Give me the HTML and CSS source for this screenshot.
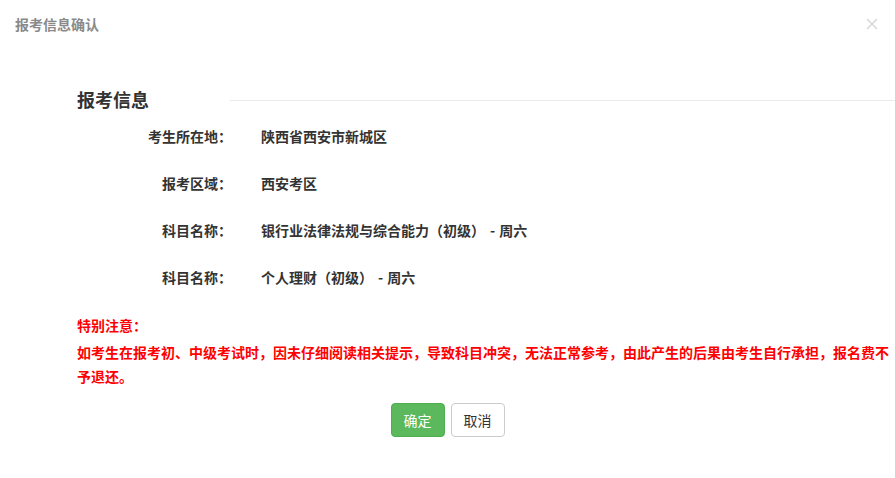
FILE: index.html
```html
<!DOCTYPE html>
<html lang="zh-CN">
<head>
<meta charset="utf-8">
<title>报考信息确认</title>
<link rel="stylesheet" href="styles.css">
</head>
<body>
<div class="modal">
  <div class="modal-header">
    <h4 class="modal-title">报考信息确认</h4>
    <button class="close" type="button" aria-label="关闭">
      <svg width="12" height="12" viewBox="0 0 12 12"><path d="M1 1 L11 11 M11 1 L1 11" stroke="#d9d9d9" stroke-width="1.6" fill="none"/></svg>
    </button>
  </div>
  <div class="modal-body">
    <div class="section-head">
      <h3 class="section-title">报考信息</h3>
      <div class="section-line"></div>
    </div>
    <div class="info-row"><span class="info-label">考生所在地：</span><span class="info-value">陕西省西安市新城区</span></div>
    <div class="info-row"><span class="info-label">报考区域：</span><span class="info-value">西安考区</span></div>
    <div class="info-row"><span class="info-label">科目名称：</span><span class="info-value">银行业法律法规与综合能力（初级）<span class="sep">-</span>周六</span></div>
    <div class="info-row"><span class="info-label">科目名称：</span><span class="info-value">个人理财（初级）<span class="sep">-</span>周六</span></div>
    <div class="notice-title">特别注意：</div>
    <p class="notice-text">如考生在报考初、中级考试时，因未仔细阅读相关提示，导致科目冲突，无法正常参考，由此产生的后果由考生自行承担，报名费不予退还。</p>
  </div>
  <div class="modal-footer">
    <button class="btn btn-success" type="button">确定</button>
    <button class="btn btn-default" type="button">取消</button>
  </div>
</div>
</body>
</html>
```

FILE: styles.css
```css
html, body {
  margin: 0;
  padding: 0;
  background: #fff;
}
body {
  font-family: "Noto Sans CJK SC", "Noto Sans", "Liberation Sans", sans-serif;
  font-size: 14px;
  color: #333;
  width: 895px;
  height: 478px;
  overflow: hidden;
}
.modal {
  display: flex;
  flex-direction: column;
}
.modal-header {
  display: flex;
  justify-content: space-between;
  align-items: center;
  padding: 14px 15px 0 15px;
  height: 20px;
}
.modal-title {
  margin: 0;
  font-size: 14px;
  line-height: 20px;
  font-weight: 700;
  color: #8a8a8a;
}
.close {
  border: 0;
  background: none;
  padding: 0;
  margin: 0 2px 0 0;
  width: 12px;
  height: 12px;
  display: flex;
}
.modal-body {
  padding: 0 0 0 77px;
}
.section-head {
  display: flex;
  align-items: center;
  margin-top: 53px;
  height: 24px;
}
.section-title {
  margin: 0;
  width: 153px;
  flex: none;
  font-size: 18px;
  line-height: 24px;
  font-weight: 700;
  color: #333;
}
.section-line {
  flex: 1;
  border-top: 1px solid #ebebeb;
  margin-top: 2px;
}
.info-row {
  display: flex;
  line-height: 20px;
  margin-top: 27px;
  font-weight: 700;
  color: #333;
}
.section-head + .info-row {
  margin-top: 15px;
}
.info-label {
  width: 155px;
  text-align: right;
  flex: none;
}
.info-value {
  margin-left: 29px;
}
.sep {
  margin: 0 4px 0 5px;
}
.notice-title {
  margin-top: 26px;
  line-height: 24px;
  color: #ff0000;
  font-weight: 700;
}
.notice-text {
  margin: 3px 0 0 0;
  line-height: 24px;
  color: #ff0000;
  font-weight: 700;
}
.modal-footer {
  display: flex;
  justify-content: center;
  gap: 6px;
  margin-top: 15px;
}
.btn {
  font-family: inherit;
  font-size: 14px;
  line-height: 20px;
  padding: 6px 12px;
  border-radius: 4px;
  border: 1px solid transparent;
  height: 34px;
  box-sizing: border-box;
}
.btn-success {
  background: #5cb85c;
  border-color: #4cae4c;
  color: #fff;
}
.btn-default {
  background: #fff;
  border-color: #ccc;
  color: #333;
}
```
